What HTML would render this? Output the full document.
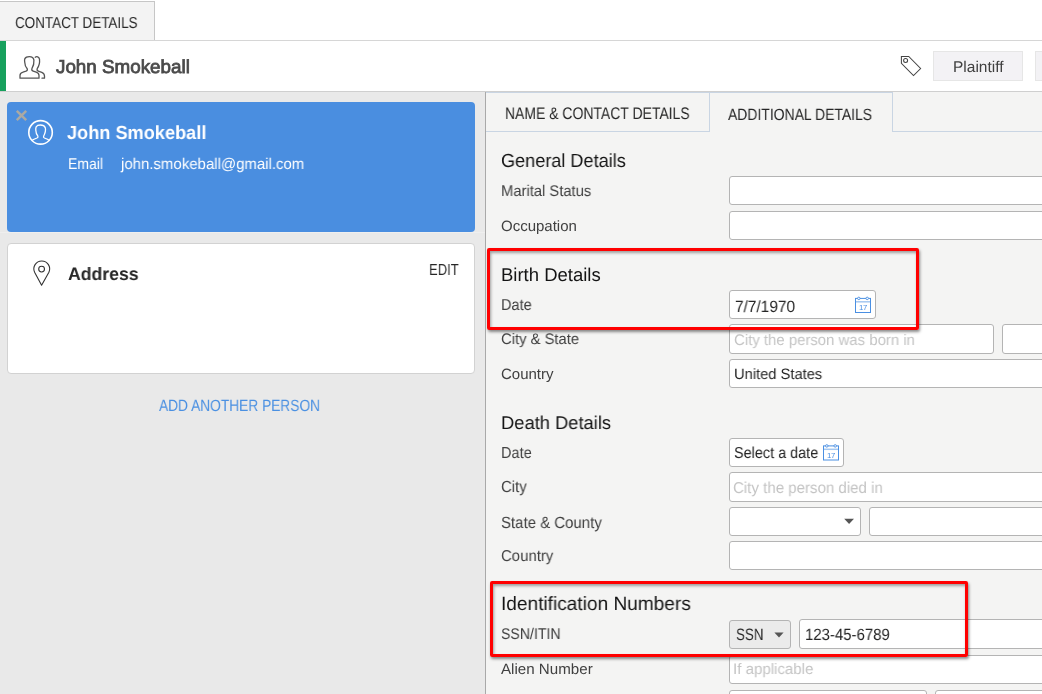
<!DOCTYPE html>
<html><head><meta charset="utf-8"><style>
*{margin:0;padding:0;box-sizing:border-box}
html,body{width:1042px;height:694px;overflow:hidden;background:#fff;font-family:"Liberation Sans",sans-serif}
.a{position:absolute}
.t{position:absolute;white-space:nowrap;line-height:20px;transform-origin:0 0;text-rendering:geometricPrecision;will-change:transform}
.inp{position:absolute;background:#fff;border:1px solid #b4b4b4;border-radius:3px}
.red{position:absolute;border:3px solid #ff0000;border-radius:2px;box-shadow:1px 2px 3px rgba(0,0,0,.45), inset 1px 2px 3px rgba(0,0,0,.35)}
</style></head>
<body>
<div class="a" style="left:-1px;top:1px;width:156px;height:40px;background:#f3f3f3;border:1px solid #c6c6c6;border-bottom:none"></div>
<div class="a" style="left:0px;top:40px;width:1042px;height:52px;background:#fff;border-top:1px solid #d6d6d6;border-bottom:1px solid #cfcfcf"></div>
<div class="a" style="left:0px;top:41px;width:6px;height:50px;background:#17a05d"></div>
<div class="a" style="left:0px;top:92px;width:485px;height:602px;background:#e9e9e9"></div>
<div class="a" style="left:0px;top:232px;width:485px;height:1px;background:#efefef"></div>
<div class="a" style="left:485px;top:92px;width:1px;height:602px;background:#a9a9a9"></div>
<div class="a" style="left:7px;top:102px;width:468px;height:130px;background:#4a8ee0;border-radius:4px"></div>
<div class="a" style="left:7px;top:243px;width:468px;height:131px;background:#fff;border:1px solid #d2d2d2;border-radius:4px"></div>
<div class="a" style="left:486px;top:92px;width:556px;height:602px;background:#f4f4f3"></div>
<div class="a" style="left:486px;top:92px;width:407px;height:1px;background:#c9d5e3"></div>
<div class="a" style="left:486px;top:131px;width:556px;height:1px;background:#c9d5e3"></div>
<div class="a" style="left:709px;top:92px;width:1px;height:39px;background:#c9d5e3"></div>
<div class="a" style="left:710px;top:131px;width:183px;height:1px;background:#f4f4f3"></div>
<div class="a" style="left:892px;top:92px;width:1px;height:40px;background:#c9d5e3"></div>
<div class="a" style="left:933px;top:51px;width:90px;height:30px;background:#f3f2f5;border:1px solid #e6e6e6"></div>
<div class="a" style="left:1035px;top:51px;width:25px;height:30px;background:#f3f2f5;border:1px solid #e6e6e6"></div>
<div class="inp" style="left:729px;top:176px;width:331px;height:29px;"></div>
<div class="inp" style="left:729px;top:211px;width:331px;height:29px;"></div>
<div class="inp" style="left:729px;top:290px;width:147px;height:29px;"></div>
<div class="inp" style="left:729px;top:324px;width:265px;height:30px;"></div>
<div class="inp" style="left:1002px;top:324px;width:58px;height:30px;"></div>
<div class="inp" style="left:729px;top:359px;width:331px;height:29px;"></div>
<div class="inp" style="left:729px;top:438px;width:115px;height:29px;"></div>
<div class="inp" style="left:729px;top:472px;width:331px;height:30px;"></div>
<div class="inp" style="left:729px;top:507px;width:132px;height:29px;"></div>
<div class="inp" style="left:869px;top:507px;width:191px;height:29px;"></div>
<div class="inp" style="left:729px;top:541px;width:331px;height:29px;"></div>
<div class="inp" style="left:729px;top:620px;width:62px;height:29px;background:#ebebeb"></div>
<div class="inp" style="left:799px;top:619px;width:261px;height:30px;"></div>
<div class="inp" style="left:729px;top:655px;width:331px;height:29px;"></div>
<div class="inp" style="left:729px;top:690px;width:198px;height:30px;"></div>
<div class="inp" style="left:935px;top:690px;width:125px;height:30px;"></div>
<div class="t" id="t0" style="left:14.60px;top:13.84px;font-size:15.75px;color:#262626;transform:scaleX(0.8542);">CONTACT DETAILS</div>
<div class="t" id="t1" style="left:56.10px;top:57.40px;font-size:18.75px;color:#4a4a4a;transform:scaleX(1.0030);-webkit-text-stroke:0.8px #4a4a4a">John Smokeball</div>
<div class="t" id="t2" style="left:952.70px;top:57.63px;font-size:15.5px;color:#404040;transform:scaleX(0.9947);">Plaintiff</div>
<div class="t" id="t3" style="left:67.40px;top:124.31px;font-size:19.0px;font-weight:bold;color:#ffffff;transform:scaleX(0.9562);">John Smokeball</div>
<div class="t" id="t4" style="left:67.90px;top:154.53px;font-size:15.5px;color:#ffffff;transform:scaleX(0.9058);">Email</div>
<div class="t" id="t5" style="left:120.77px;top:154.53px;font-size:15.5px;color:#ffffff;transform:scaleX(0.9656);">john.smokeball@gmail.com</div>
<div class="t" id="t6" style="left:67.60px;top:263.76px;font-size:18.0px;font-weight:bold;color:#262626;transform:scaleX(0.9799);">Address</div>
<div class="t" id="t7" style="left:429.00px;top:260.65px;font-size:16.0px;color:#262626;transform:scaleX(0.8150);">EDIT</div>
<div class="t" id="t8" style="left:159.40px;top:396.07px;font-size:16.25px;color:#4a90e2;transform:scaleX(0.8450);">ADD ANOTHER PERSON</div>
<div class="t" id="t9" style="left:504.50px;top:104.49px;font-size:16.75px;color:#262626;transform:scaleX(0.8338);">NAME &amp; CONTACT DETAILS</div>
<div class="t" id="t10" style="left:728.40px;top:105.37px;font-size:16.25px;color:#262626;transform:scaleX(0.8580);">ADDITIONAL DETAILS</div>
<div class="t" id="t11" style="left:500.70px;top:152.31px;font-size:19.0px;color:#141414;transform:scaleX(0.9530);">General Details</div>
<div class="t" id="t12" style="left:500.70px;top:181.83px;font-size:15.5px;color:#404040;transform:scaleX(0.9520);">Marital Status</div>
<div class="t" id="t13" style="left:500.70px;top:217.00px;font-size:15.0px;color:#404040;transform:scaleX(0.9987);">Occupation</div>
<div class="t" id="t14" style="left:500.90px;top:264.79px;font-size:18.5px;color:#141414;transform:scaleX(0.9998);">Birth Details</div>
<div class="t" id="t15" style="left:500.70px;top:295.64px;font-size:15.75px;color:#404040;transform:scaleX(0.9227);">Date</div>
<div class="t" id="t16" style="left:734.70px;top:296.67px;font-size:16.25px;color:#262626;transform:scaleX(0.9486);">7/7/1970</div>
<div class="t" id="t17" style="left:500.70px;top:330.11px;font-size:15.25px;color:#404040;transform:scaleX(0.9699);">City &amp; State</div>
<div class="t" id="t18" style="left:733.60px;top:330.91px;font-size:15.25px;color:#c4c4c4;transform:scaleX(0.9789);">City the person was born in</div>
<div class="t" id="t19" style="left:500.70px;top:364.70px;font-size:15.0px;color:#404040;transform:scaleX(0.9955);">Country</div>
<div class="t" id="t20" style="left:734.20px;top:364.80px;font-size:15.0px;color:#262626;transform:scaleX(0.9796);">United States</div>
<div class="t" id="t21" style="left:500.70px;top:412.99px;font-size:18.5px;color:#141414;transform:scaleX(0.9915);">Death Details</div>
<div class="t" id="t22" style="left:500.70px;top:443.95px;font-size:16.0px;color:#404040;transform:scaleX(0.9083);">Date</div>
<div class="t" id="t23" style="left:733.70px;top:444.44px;font-size:15.75px;color:#262626;transform:scaleX(0.9158);">Select a date</div>
<div class="t" id="t24" style="left:500.70px;top:478.25px;font-size:16.0px;color:#404040;transform:scaleX(0.9361);">City</div>
<div class="t" id="t25" style="left:733.20px;top:478.74px;font-size:15.75px;color:#c4c4c4;transform:scaleX(0.9559);">City the person died in</div>
<div class="t" id="t26" style="left:500.70px;top:513.07px;font-size:16.25px;color:#404040;transform:scaleX(0.9220);">State &amp; County</div>
<div class="t" id="t27" style="left:500.70px;top:546.74px;font-size:15.75px;color:#404040;transform:scaleX(0.9481);">Country</div>
<div class="t" id="t28" style="left:500.60px;top:594.93px;font-size:19.25px;color:#141414;transform:scaleX(0.9909);">Identification Numbers</div>
<div class="t" id="t29" style="left:500.70px;top:624.63px;font-size:15.5px;color:#404040;transform:scaleX(0.9106);">SSN/ITIN</div>
<div class="t" id="t30" style="left:736.20px;top:625.38px;font-size:16.5px;color:#262626;transform:scaleX(0.8110);">SSN</div>
<div class="t" id="t31" style="left:804.80px;top:624.67px;font-size:16.25px;color:#262626;transform:scaleX(0.9210);">123-45-6789</div>
<div class="t" id="t32" style="left:500.70px;top:659.70px;font-size:15.0px;color:#404040;transform:scaleX(1.0092);">Alien Number</div>
<div class="t" id="t33" style="left:733.20px;top:659.91px;font-size:15.25px;color:#c4c4c4;transform:scaleX(0.9878);">If applicable</div>
<svg class="a" style="left:0;top:0" width="1042" height="694" viewBox="0 0 1042 694">
<g fill="none" stroke="#555" stroke-width="1.3" stroke-linejoin="round" stroke-linecap="round">
<path d="M20,78.2 L20,75.5 C20,73.8 21,72.8 23,72.2 L26,71.2 C27.2,70.7 27.6,69.8 27.2,68.8 C25.6,67 24.8,64.6 24.7,62 C24.5,61 24.5,59.6 24.9,58.6 C25.8,56.8 27.6,56.6 29.3,56.6 C31.6,56.6 33.6,57.8 33.9,60.2 C34.1,62.6 33.4,66.2 31.9,68.6 C31.5,69.8 32,70.7 33.2,71.1 L36.2,72.2 C38.2,72.9 39,73.8 39,75.6 L39,78.2 Z"/>
<path d="M35.2,57.2 C36.6,56.2 39,56.7 39.5,59.2 C39.8,61.8 39.3,65.6 37.2,68.6 C36.8,69.8 37.2,70.7 38.3,71.1 L41.8,72.3 C43.6,73 44.5,74.1 44.5,76 L44.5,78.2 L42,78.2"/>
</g>
<g fill="none" stroke="#444" stroke-width="1.05" stroke-linejoin="miter">
<path d="M901.4,56.4 L908.75,56.4 L920.6,68.5 L913.5,75.5 L901.4,63.4 Z"/>
<circle cx="905.6" cy="60.5" r="2"/>
</g>
<g fill="none" stroke="#aba9a3" stroke-width="2.5" stroke-linecap="butt">
<path d="M16.8,110.8 L26.2,120.2 M26.2,110.8 L16.8,120.2"/>
</g>
<g fill="none" stroke="#fff" stroke-width="1.6">
<circle cx="40.55" cy="132.4" r="11.75"/>
</g>
<g fill="none" stroke="#fff" stroke-width="1.3" stroke-linejoin="round">
<path d="M31.8,140.6 C33.5,139.2 35.2,138.6 37,138 C37.9,137.6 38.2,137 37.9,136.2 C36.6,134.6 35.9,132.5 35.8,130.2 C35.7,129.2 35.8,127.8 36.2,126.8 C37,125.4 38.6,125 40.4,125 C42.6,125 44.6,126 45.3,127.8 C45.8,129.6 45.4,132.6 43.6,136.2 C43.3,137 43.6,137.6 44.4,138 C46.2,138.6 48,139.2 49.5,140.6"/>
</g>
<g fill="none" stroke="#333" stroke-width="1.1">
<path d="M34.6,272.2 A7.9,7.9 0 1 1 48.9,272.2 L41.6,285.2 Z" stroke-linejoin="round"/>
<circle cx="41.6" cy="269.1" r="2.9"/>
</g>
<g transform="translate(855,297.5)" fill="none" stroke="#4a8fe2">
<rect x="0.5" y="0.9" width="15" height="14.1" stroke-width="1"/>
<line x1="1" y1="4.3" x2="15.5" y2="4.3" stroke-width="1.5" stroke-opacity="0.5"/>
<circle cx="3.8" cy="0.9" r="1.25" fill="#fff" stroke-width="0.9"/>
<circle cx="12.2" cy="0.9" r="1.25" fill="#fff" stroke-width="0.9"/>
<text x="8" y="12.6" font-family="Liberation Sans" font-size="7.8" fill="#4a8fe2" stroke="none" text-anchor="middle" letter-spacing="-0.3">17</text>
</g>
<g transform="translate(823,445)" fill="none" stroke="#4a8fe2">
<rect x="0.5" y="0.9" width="15" height="14.1" stroke-width="1"/>
<line x1="1" y1="4.3" x2="15.5" y2="4.3" stroke-width="1.5" stroke-opacity="0.5"/>
<circle cx="3.8" cy="0.9" r="1.25" fill="#fff" stroke-width="0.9"/>
<circle cx="12.2" cy="0.9" r="1.25" fill="#fff" stroke-width="0.9"/>
<text x="8" y="12.6" font-family="Liberation Sans" font-size="7.8" fill="#4a8fe2" stroke="none" text-anchor="middle" letter-spacing="-0.3">17</text>
</g>
<path d="M844.2,518.8 L854,518.8 L849.1,524 Z" fill="#555"/>
<path d="M774.4,632.4 L783.6,632.4 L779,637.4 Z" fill="#555"/>
</svg>
<div class="red" style="left:487px;top:248px;width:432px;height:82px;"></div>
<div class="red" style="left:490px;top:581px;width:478px;height:76px;"></div>
</body></html>
